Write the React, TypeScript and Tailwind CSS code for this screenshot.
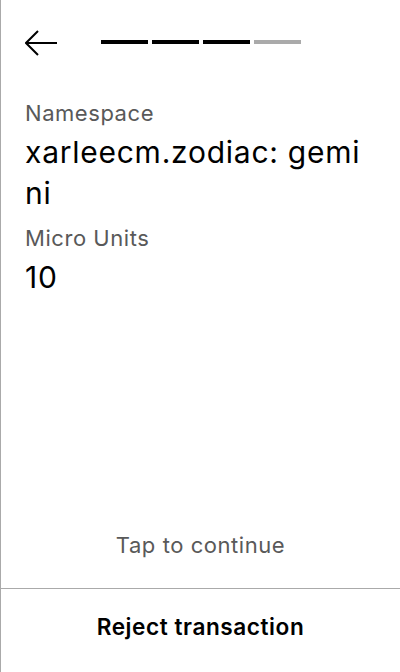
import React from 'react';

const steps = [true, true, true, false];

const BackArrow = () => (
  <svg width="32" height="26" viewBox="0 0 32 26" fill="none" stroke="#000" strokeWidth="2">
    <path d="M1 13H32" />
    <path d="M13 1L1 13L13 25" />
  </svg>
);

const Field = ({ label, value }: { label: string; value: string }) => (
  <div className="flex flex-col gap-[5px]">
    <span className="text-[22px] leading-[28px] tracking-wide text-[#595959]">{label}</span>
    <span className="text-[30px] leading-[41px] tracking-wide text-black break-all">{value}</span>
  </div>
);

export default function App() {
  return (
    <div
      className="w-[400px] h-[672px] bg-white border-l border-[#aaaaaa] flex flex-col"
      style={{ fontFamily: 'Inter, "Noto Sans", sans-serif' }}
    >
      {/* Header */}
      <div className="flex items-center px-6 pt-[30px]">
        <button className="w-8 h-[26px] flex items-center">
          <BackArrow />
        </button>
        <div className="flex gap-1 ml-[44px] mb-[2px]">
          {steps.map((done, i) => (
            <div key={i} className={`w-[47px] h-1 ${done ? 'bg-black' : 'bg-[#aaaaaa]'}`} />
          ))}
        </div>
      </div>

      {/* Details */}
      <div className="flex flex-col gap-[10px] px-6 pt-[43px]">
        <Field label="Namespace" value="xarleecm.zodiac: gemini" />
        <Field label="Micro Units" value="10" />
      </div>

      <div className="flex-1" />

      <div className="text-center text-[22px] leading-[28px] tracking-wide text-[#595959] pb-[29px]">
        Tap to continue
      </div>

      <div className="border-t border-[#aaaaaa] h-[84px] flex justify-center pt-[24px]">
        <button className="text-[22.6px] leading-[28px] tracking-wide font-semibold text-black h-fit">
          Reject transaction
        </button>
      </div>
    </div>
  );
}
